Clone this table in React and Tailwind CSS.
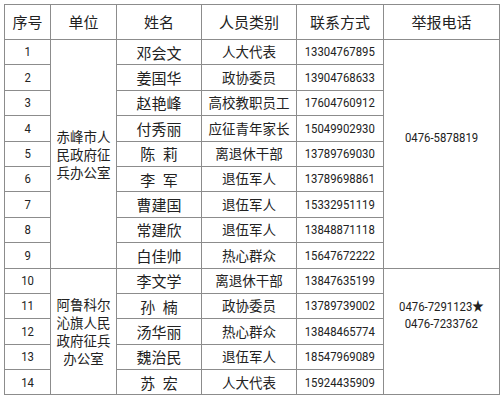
const rows = [
  ["1", "邓会文", "人大代表", "13304767895"],
  ["2", "姜国华", "政协委员", "13904768633"],
  ["3", "赵艳峰", "高校教职员工", "17604760912"],
  ["4", "付秀丽", "应征青年家长", "15049902930"],
  ["5", "陈\u2002莉", "离退休干部", "13789769030"],
  ["6", "李\u2002军", "退伍军人", "13789698861"],
  ["7", "曹建国", "退伍军人", "15332951119"],
  ["8", "常建欣", "退伍军人", "13848871118"],
  ["9", "白佳帅", "热心群众", "15647672222"],
  ["10", "李文学", "离退休干部", "13847635199"],
  ["11", "孙\u2002楠", "政协委员", "13789739002"],
  ["12", "汤华丽", "热心群众", "13848465774"],
  ["13", "魏治民", "退伍军人", "18547969089"],
  ["14", "苏\u2002宏", "人大代表", "15924435909"],
];

const cjk = "font-['Noto_Sans_CJK_SC',sans-serif]";
const num = "font-['Roboto','Noto_Sans_CJK_SC',sans-serif]";
const cell = "border border-[#8c8c8c] text-center align-middle p-0";

// narrow digits like the source font
function Num({ children }) {
  return <span className="inline-block scale-x-[0.84] whitespace-nowrap">{children}</span>;
}

export default function App() {
  return (
    <div className="w-[504px] h-[400px] bg-white pt-[4px] pl-[4px]">
      <table className="table-fixed border-collapse w-[495px] text-[#222]">
        <colgroup>
          <col className="w-[46px]" />
          <col className="w-[66px]" />
          <col className="w-[85px]" />
          <col className="w-[95px]" />
          <col className="w-[87px]" />
          <col className="w-[116px]" />
        </colgroup>
        <thead>
          <tr className={`h-[35px] text-[15px] ${cjk}`}>
            <th className={`${cell} font-normal`}>序号</th>
            <th className={`${cell} font-normal`}>单位</th>
            <th className={`${cell} font-normal`}>姓名</th>
            <th className={`${cell} font-normal`}>人员类别</th>
            <th className={`${cell} font-normal`}>联系方式</th>
            <th className={`${cell} font-normal`}>举报电话</th>
          </tr>
        </thead>
        <tbody>
          {rows.map((r, i) => (
            <tr key={r[0]} className="h-[25.4px]">
              <td className={`${cell} ${num} text-[13.5px] leading-none`}>
                <Num>{r[0]}</Num>
              </td>
              {i === 0 && (
                <td rowSpan={9} className={`${cell} ${cjk} text-[13.5px] leading-[18px]`}>
                  赤峰市人<br />民政府征<br />兵办公室
                </td>
              )}
              {i === 9 && (
                <td rowSpan={5} className={`${cell} ${cjk} text-[13.5px] leading-[18px]`}>
                  阿鲁科尔<br />沁旗人民<br />政府征兵<br />办公室
                </td>
              )}
              <td className={`${cell} ${cjk} text-[15px] leading-none whitespace-pre`}>{r[1]}</td>
              <td className={`${cell} ${cjk} text-[13.5px] leading-none`}>{r[2]}</td>
              <td className={`${cell} ${num} text-[13.5px] leading-none`}>
                <Num>{r[3]}</Num>
              </td>
              {i === 0 && (
                <td rowSpan={9} className={`${cell} ${num} text-[13.5px] leading-[17px] pb-[33px]`}>
                  <Num>0476-5878819</Num>
                </td>
              )}
              {i === 9 && (
                <td rowSpan={5} className={`${cell} ${num} text-[13.5px] leading-[17px] pb-[33px]`}>
                  <Num>
                    0476-7291123★<br />0476-7233762
                  </Num>
                </td>
              )}
            </tr>
          ))}
        </tbody>
      </table>
    </div>
  );
}
